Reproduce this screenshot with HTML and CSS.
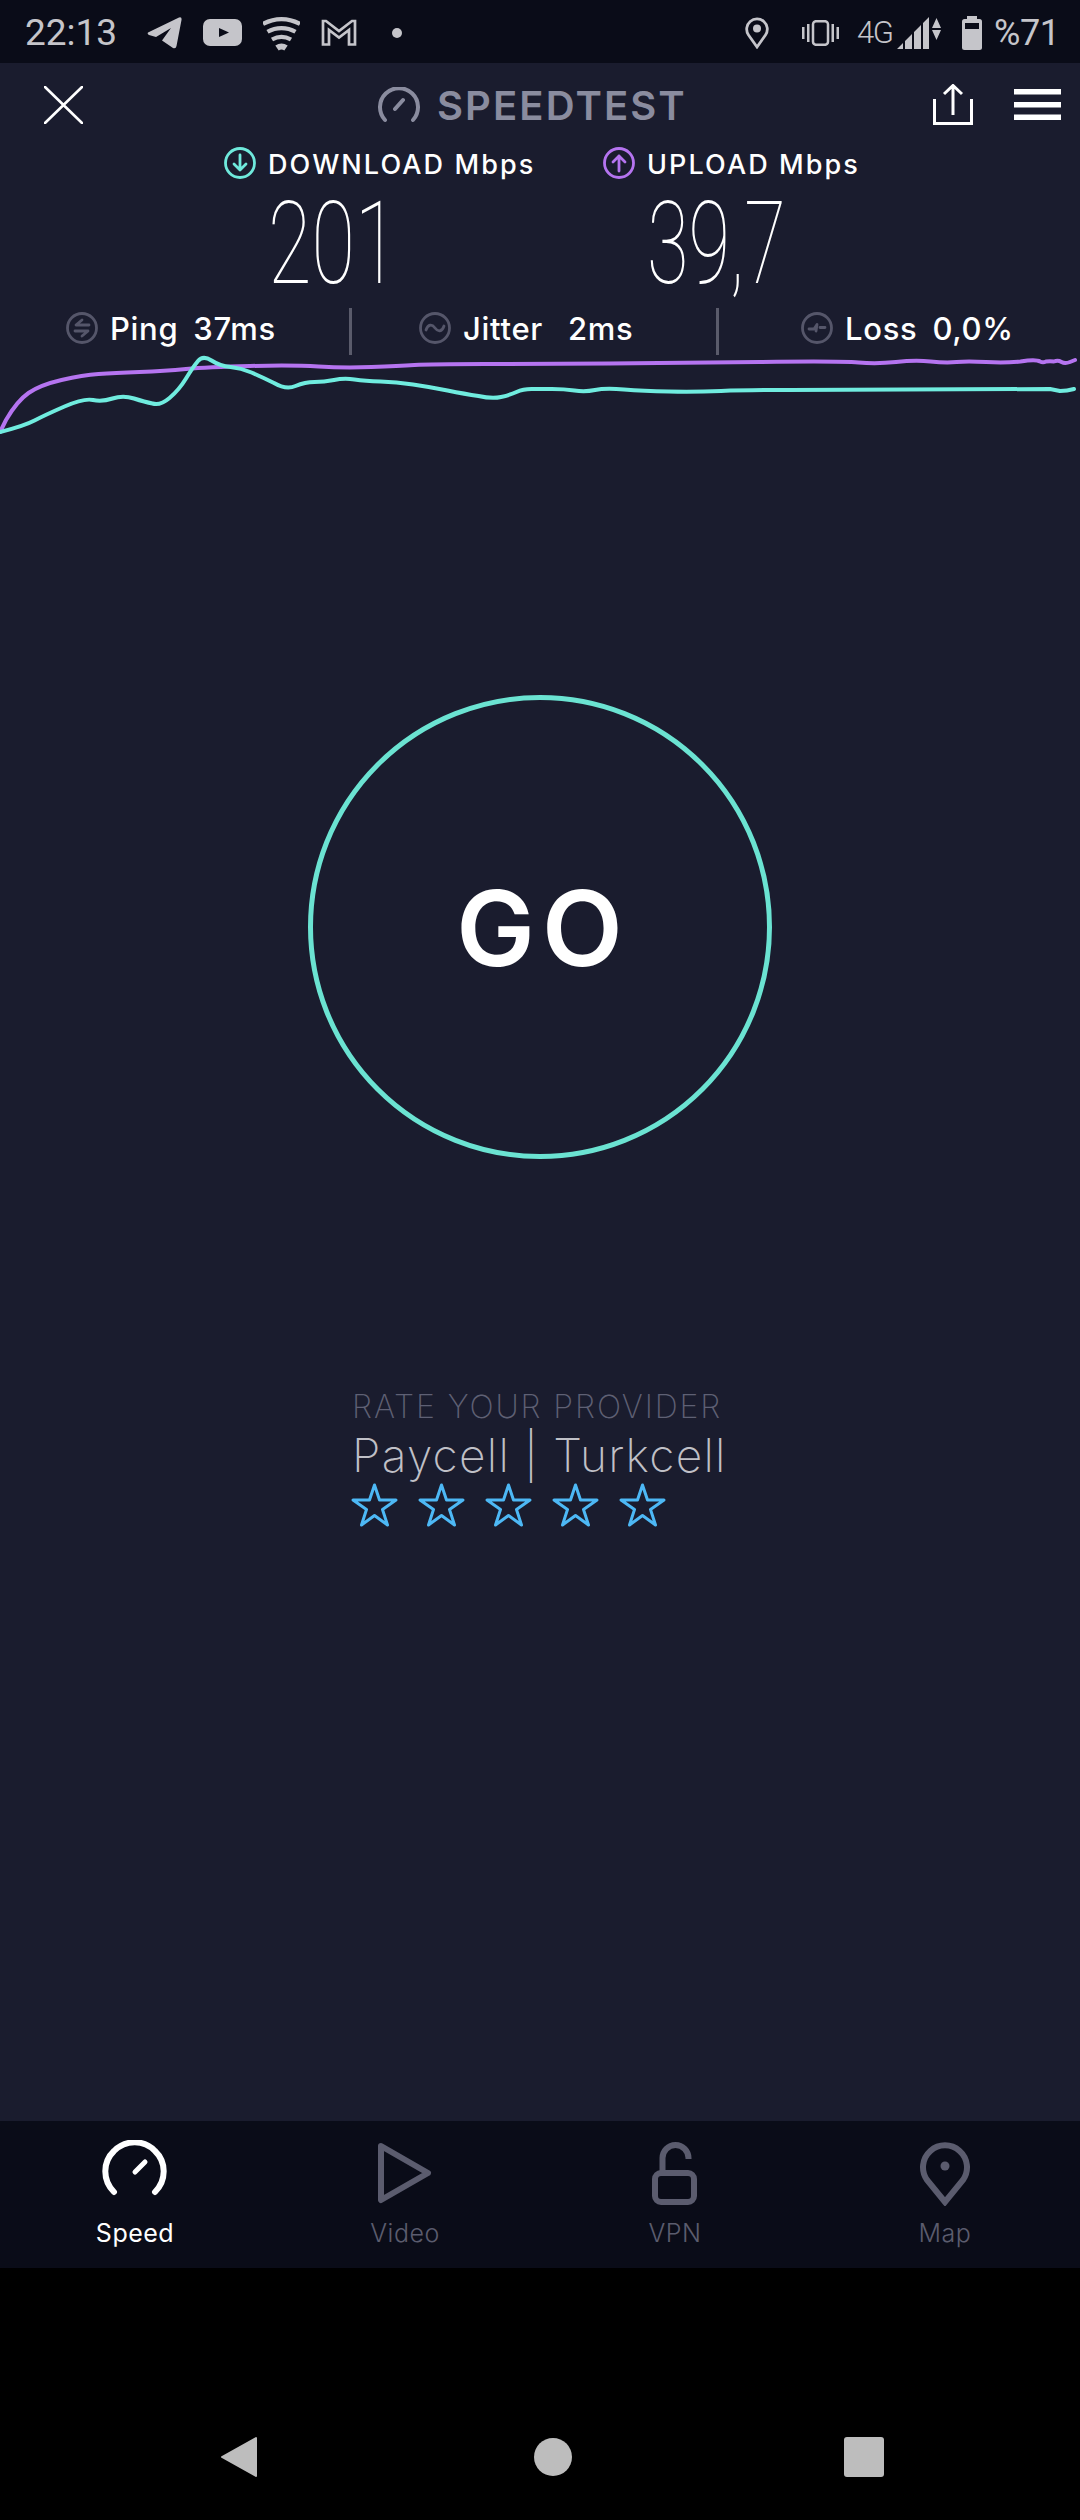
FILE: index.html
```html
<!DOCTYPE html>
<html lang="en">
<head>
  <meta charset="UTF-8" />
  <title>Speedtest</title>
  <link rel="stylesheet" href="styles.css">
</head>
<body>
  <div class="status">
    <span class="clock">22:13</span>
    <svg class="st-icon" width="35" height="32" viewBox="0 0 35 32"><path d="M1 15.5 32 .5Q35-.5 34.5 3L29.5 29Q29 32 26 31L15 23.5 24 11 9 20 2 18Q0 17 1 15.5Z"/></svg>
    <svg class="st-icon" width="39" height="27" viewBox="0 0 39 27"><rect width="39" height="27" rx="7"/><path class="cut" d="M16 9 26 13.5 16 18Z"/></svg>
    <svg class="st-line" width="37" height="36" viewBox="0 0 37 36"><path d="M0 9A37 37 0 0 1 37 9M4.5 16.8A28 28 0 0 1 32.5 16.8M9 24.5A19 19 0 0 1 28 24.5" stroke-width="4.2"/><path d="M14 33A8 8 0 0 1 23 33" stroke-width="6"/></svg>
    <svg class="st-line" width="36" height="27" viewBox="0 0 36 27"><path d="M2 25.5V2H5L18 12 31 2H34V25.5H28V11L18 18.5 8 11V25.5Z" stroke-width="2.7"/></svg>
    <span class="dot"></span>

    <svg class="st-line pin-small" width="24" height="32" viewBox="0 0 24 32"><path d="M12 30 3.5 18A10.3 10.3 0 1 1 20.5 18Z" stroke-width="2.8"/><circle class="filled" cx="12" cy="11.5" r="4"/></svg>
    <svg class="st-icon vibrate" width="37" height="26" viewBox="0 0 37 26"><rect y="7" width="2.5" height="12"/><rect x="5" y="4" width="2.5" height="18"/><rect class="outline" x="11" y="1.2" width="15" height="23.6" rx="3"/><rect x="29.5" y="4" width="2.5" height="18"/><rect x="34.5" y="7" width="2.5" height="12"/></svg>
    <span class="net">4G</span>
    <svg class="st-icon signal" width="44" height="33" viewBox="0 0 44 33"><path d="M0 33 6 27V33ZM8 25 15 18V33H8ZM17 16 24 9V33H17ZM26 7 32 1V33H26ZM35 12 39.5 2 44 12ZM35 14H44L39.5 24Z"/></svg>
    <svg class="st-icon battery" width="20" height="34" viewBox="0 0 20 34"><rect x="5" width="10" height="4"/><rect y="3" width="20" height="31" rx="2.5"/><rect class="cut" x="3" y="7" width="14" height="6"/></svg>
    <span class="percent">%71</span>
  </div>

  <div class="app">
    <div class="toolbar">
      <svg class="close" width="39" height="38" viewBox="0 0 39 38"><path d="M1 1 38 37M38 1 1 37"/></svg>
      <div class="title">
        <svg width="42" height="36" viewBox="0 0 42 36"><path d="M7 33A19 19 0 1 1 35 33M17 22 25 13"/></svg>
        <span>SPEEDTEST</span>
      </div>
      <svg class="share" width="40" height="41" viewBox="0 0 40 41"><path d="M1.5 15V39.5H38.5V15M20 2V31M11 10 20 1.5 29 10"/></svg>
      <svg class="menu" width="47" height="31" viewBox="0 0 47 31"><rect width="47" height="5.5"/><rect y="13" width="47" height="5.5"/><rect y="25.5" width="47" height="5.5"/></svg>
    </div>

    <div class="speeds">
      <div class="speed speed-down">
        <div class="speed-label">
          <svg class="ring" width="32" height="32" viewBox="0 0 32 32"><circle cx="16" cy="16" r="14.5"/><path d="M16 8V23M10 17 16 23 22 17"/></svg>
          <span>DOWNLOAD Mbps</span>
        </div>
        <div class="speed-value">201</div>
      </div>
      <div class="speed speed-up">
        <div class="speed-label">
          <svg class="ring" width="32" height="32" viewBox="0 0 32 32"><circle cx="16" cy="16" r="14.5"/><path d="M16 24V9M10 15 16 9 22 15"/></svg>
          <span>UPLOAD Mbps</span>
        </div>
        <div class="speed-value">39,7</div>
      </div>
    </div>

    <div class="stats">
      <div class="stat stat-ping">
        <svg width="32" height="32" viewBox="0 0 32 32"><circle cx="16" cy="16" r="14.5"/><path class="thick" d="M23 13H10L16 8M9 19H22L16 24"/></svg>
        <span>Ping</span><span class="stat-value">37ms</span>
      </div>
      <div class="stat stat-jitter">
        <svg width="32" height="32" viewBox="0 0 32 32"><circle cx="16" cy="16" r="14.5"/><path d="M7 18C9 12 13 12 16 16S23 20 25 14"/></svg>
        <span>Jitter</span><span class="stat-value">2ms</span>
      </div>
      <div class="stat stat-loss">
        <svg width="32" height="32" viewBox="0 0 32 32"><circle cx="16" cy="16" r="14.5"/><path d="M8 17H13L16 12.5 15 19M19 15.5H24"/></svg>
        <span>Loss</span><span class="stat-value">0,0%</span>
      </div>
    </div>

    <svg class="chart" width="1080" height="80" viewBox="0 355 1080 80">
      <path class="line-up" d="M0 432L6 420Q17 401 28.5 393Q40 385 61.5 380Q83 375 98.5 374Q114 373 139.5 372Q165 371 186 369Q207 367 250 366Q293 365 318.5 366.5Q344 368 371.5 367Q399 366 414.5 365Q430 364 485 364Q540 364 609 363.5Q678 363 759 362Q840 361 858.5 362.5Q877 364 896 362Q915 360 930.5 361.5Q946 363 956.5 362Q967 361 986 362Q1005 363 1020.5 361.5Q1036 359 1040 361.5Q1043 363 1046 361.5Q1050 361 1054 361.5Q1058 360 1061.5 362Q1065 364 1070 362L1075 360"/>
      <path class="line-down" d="M0 432Q24 426 34.5 420.5Q45 415 64.5 406.5Q84 398 93 400Q102 402 112.5 398.5Q123 395 134 398.5Q145 402 152.5 403.5Q160 406 169.5 398Q179 390 186 378.5Q193 367 198 361Q203 355 211.5 360.5Q220 366 230.5 367Q241 368 251.5 372.5Q262 377 274 383Q286 390 295.5 386Q305 382 314.5 382Q324 382 334 380Q344 378 354.5 379.5Q365 381 380.5 381.5Q396 382 413 384.5Q430 387 447.5 390.5Q465 394 478.5 396Q492 399 501 397Q510 395 516.5 392Q523 389 531.5 389Q540 389 552 389Q564 389 574.5 390.5Q585 392 595 390Q605 388 624 389.5Q643 391 669 391.5Q695 392 721 391Q747 390 790 390L1050 389Q1055 390 1060 391Q1067 391 1074 389"/>
    </svg>

    <main class="content">
      <div class="go">GO</div>
      <div class="rate">
        <div class="rate-title">RATE YOUR PROVIDER</div>
        <div class="rate-name">Paycell | Turkcell</div>
        <div class="stars">
          <svg width="47" height="44" viewBox="0 0 47 44"><path d="M23.5 2 28.5 17H45L31.5 26.5 36.5 42 23.5 32.5 10.5 42 15.5 26.5 2 17H18.5Z"/></svg>
          <svg width="47" height="44" viewBox="0 0 47 44"><path d="M23.5 2 28.5 17H45L31.5 26.5 36.5 42 23.5 32.5 10.5 42 15.5 26.5 2 17H18.5Z"/></svg>
          <svg width="47" height="44" viewBox="0 0 47 44"><path d="M23.5 2 28.5 17H45L31.5 26.5 36.5 42 23.5 32.5 10.5 42 15.5 26.5 2 17H18.5Z"/></svg>
          <svg width="47" height="44" viewBox="0 0 47 44"><path d="M23.5 2 28.5 17H45L31.5 26.5 36.5 42 23.5 32.5 10.5 42 15.5 26.5 2 17H18.5Z"/></svg>
          <svg width="47" height="44" viewBox="0 0 47 44"><path d="M23.5 2 28.5 17H45L31.5 26.5 36.5 42 23.5 32.5 10.5 42 15.5 26.5 2 17H18.5Z"/></svg>
        </div>
      </div>
    </main>

    <nav class="tabs">
      <div class="tab active">
        <svg width="70" height="66" viewBox="0 0 70 66"><path d="M14 52A29 29 0 1 1 55 52"/><path d="M35 32 45 22" stroke-width="5"/></svg>
        <span>Speed</span>
      </div>
      <div class="tab">
        <svg width="70" height="66" viewBox="0 0 70 66"><path d="M11 6 58 33 11 60Z"/></svg>
        <span>Video</span>
      </div>
      <div class="tab">
        <svg width="70" height="66" viewBox="0 0 70 66"><rect x="15" y="33" width="39" height="29" rx="6"/><path d="M22.5 33V18A13 13 0 0 1 48.5 18V19" stroke-linecap="butt"/></svg>
        <span>VPN</span>
      </div>
      <div class="tab">
        <svg width="70" height="66" viewBox="0 0 70 66"><path d="M35 62 17 40A22 22 0 1 1 53 40Z" stroke-linejoin="miter"/><circle class="pin-dot" cx="35" cy="26" r="4.5"/></svg>
        <span>Map</span>
      </div>
    </nav>
  </div>

  <div class="nav">
    <svg class="nav-back" width="37" height="42" viewBox="0 0 37 42"><path d="M36 2V40L2 21Z"/></svg>
    <span class="nav-home"></span>
    <span class="nav-recent"></span>
  </div>
</body>
</html>
```

FILE: styles.css
```css
* {
  box-sizing: border-box;
}
body {
  margin: 0;
  width: 1080px;
  height: 2520px;
  display: flex;
  flex-direction: column;
  background: #000;
  color: #fff;
  font-family: Inter, "Noto Sans", sans-serif;
  overflow: hidden;
}
svg {
  display: block;
  flex: none;
}

/* status bar */
.status {
  height: 63px;
  flex: none;
  display: flex;
  align-items: center;
  padding: 2px 24px 0 25px;
  background: #0a0c18;
  color: #c5c5ca;
  font-family: Roboto, sans-serif;
}
.clock {
  font-size: 37px;
  width: 91px;
  margin-right: 31px;
}
.st-icon {
  fill: #c5c5ca;
  margin-right: 21px;
}
.st-icon .cut {
  fill: #0a0c18;
}
.st-line {
  fill: none;
  stroke: #c5c5ca;
  margin-right: 21px;
}
.st-line .filled {
  fill: #c5c5ca;
  stroke: none;
}
.dot {
  width: 10px;
  height: 10px;
  border-radius: 50%;
  background: #c5c5ca;
  margin-left: 14px;
}
.pin-small {
  margin-left: auto;
  margin-right: 33px;
}
.vibrate {
  margin-right: 18px;
}
.vibrate .outline {
  fill: none;
  stroke: #c5c5ca;
  stroke-width: 2.5;
}
.net {
  font-size: 31px;
  font-weight: 300;
  letter-spacing: -1.5px;
  width: 33px;
  margin-right: 7px;
}
.signal {
  margin-right: 21px;
}
.battery {
  margin-right: 12px;
}
.percent {
  font-size: 36px;
  letter-spacing: -0.4px;
  width: 62px;
  white-space: nowrap;
}

/* app area */
.app {
  height: 2205px;
  flex: none;
  display: flex;
  flex-direction: column;
  background: #1a1c2e;
}
.toolbar {
  height: 75px;
  flex: none;
  display: flex;
  align-items: flex-start;
  padding: 21px 19px 0 44px;
}
.close {
  margin-top: 2px;
  fill: none;
  stroke: #fff;
  stroke-width: 2.6;
  stroke-linecap: round;
}
.title {
  display: flex;
  align-items: center;
  gap: 17px;
  margin-left: 295px;
  width: 555px;
  font-size: 40px;
  font-weight: 600;
  line-height: 40px;
  color: #8a8c9f;
  letter-spacing: 2.1px;
}
.title span {
  padding-top: 2px;
}
.title svg {
  fill: none;
  stroke: #8a8c9f;
  stroke-width: 4;
  stroke-linecap: round;
}
.share {
  fill: none;
  stroke: #fff;
  stroke-width: 3;
  margin-left: 1px;
}
.menu {
  fill: #fff;
  margin: 5px 0 0 41px;
}

/* download / upload */
.speeds {
  flex: none;
  display: flex;
  height: 170px;
  padding: 9px 0 0 224px;
}
.speed {
  width: 379px;
}
.speed-label {
  display: flex;
  align-items: center;
  gap: 12px;
  height: 32px;
  font-size: 27px;
  font-weight: 500;
  letter-spacing: 2.1px;
}
.speed-label span {
  padding-top: 2px;
}
.ring {
  fill: none;
  stroke-width: 2.8;
  stroke-linecap: round;
  stroke-linejoin: round;
}
.speed-down .ring {
  stroke: #6fe9dc;
}
.speed-up .ring {
  stroke: #b574f0;
}
.speed-value {
  margin: 5px 0 0 44px;
  font-family: Roboto, sans-serif;
  font-size: 115px;
  font-weight: 100;
  line-height: 120px;
  transform: scaleX(0.69);
  transform-origin: left center;
  white-space: nowrap;
}
.speed-up .speed-value {
  transform: scaleX(0.66);
}

/* ping / jitter / loss */
.stats {
  flex: none;
  display: flex;
  height: 47px;
  padding-left: 66px;
  font-size: 31px;
  font-weight: 500;
  letter-spacing: 0.7px;
}
.stat {
  display: flex;
  align-items: center;
  padding-bottom: 7px;
}
.stat svg {
  fill: none;
  stroke: #55566a;
  stroke-width: 2.8;
  stroke-linecap: round;
  stroke-linejoin: round;
  margin-right: 12px;
}
.stat-ping {
  width: 286px;
  border-right: 3px solid #5a5b6b;
}
.stat-jitter {
  width: 300px;
  margin-left: 67px;
  border-right: 3px solid #5a5b6b;
}
.stat-loss {
  margin-left: 82px;
}
.stat-value {
  margin-left: 15px;
}
.stat-jitter .stat-value {
  margin-left: 25px;
}
.chart {
  flex: none;
  overflow: visible;
  fill: none;
  stroke-width: 4;
  stroke-linecap: round;
  stroke-linejoin: round;
}
.line-up {
  stroke: #b574f0;
}
.line-down {
  stroke: #70ecdf;
}

/* go button and rating */
.content {
  flex: 1;
  display: flex;
  flex-direction: column;
  align-items: center;
  padding-top: 260px;
}
.go {
  width: 464px;
  height: 464px;
  flex: none;
  display: flex;
  align-items: center;
  justify-content: center;
  padding-left: 6px;
  border: 5px solid #6be3d2;
  border-radius: 50%;
  font-size: 105px;
  font-weight: 600;
  letter-spacing: 7px;
}
.rate {
  align-self: flex-start;
  margin: 229px 0 0 352px;
}
.rate-title {
  font-size: 32px;
  font-weight: 200;
  line-height: 38px;
  color: #5f6074;
  letter-spacing: 1.9px;
  white-space: nowrap;
}
.rate-name {
  margin-top: 4px;
  font-size: 46px;
  font-weight: 200;
  line-height: 50px;
  color: #c0c0c7;
  letter-spacing: 1.3px;
  white-space: nowrap;
}
.stars {
  display: flex;
  gap: 20px;
  margin: 3px 0 0 -1px;
  fill: none;
  stroke: #4db8f5;
  stroke-width: 3;
  stroke-linejoin: round;
}

/* bottom tabs */
.tabs {
  height: 147px;
  flex: none;
  display: grid;
  grid-template-columns: repeat(4, 270px);
  background: #0a0c18;
}
.tab {
  display: flex;
  flex-direction: column;
  align-items: center;
  padding-top: 19px;
  color: #5b5c6e;
  font-size: 25px;
  font-weight: 300;
  letter-spacing: 0.5px;
}
.tab span {
  margin-top: 11px;
  line-height: 32px;
}
.tab svg {
  fill: none;
  stroke: #5b5c6e;
  stroke-width: 6;
  stroke-linecap: round;
  stroke-linejoin: round;
}
.tab .pin-dot {
  fill: #5b5c6e;
  stroke: none;
}
.tab.active {
  color: #fff;
  font-weight: 400;
}
.tab.active svg {
  stroke: #fff;
}

/* android nav */
.nav {
  flex: 1;
  display: flex;
  align-items: center;
  padding: 126px 0 0 220px;
}
.nav-back {
  fill: #bdbdbd;
  stroke: #bdbdbd;
  stroke-width: 2;
  stroke-linejoin: round;
}
.nav-home {
  width: 38px;
  height: 38px;
  margin-left: 277px;
  border-radius: 50%;
  background: #bdbdbd;
}
.nav-recent {
  width: 40px;
  height: 40px;
  margin-left: 272px;
  border-radius: 3px;
  background: #bdbdbd;
}
```
